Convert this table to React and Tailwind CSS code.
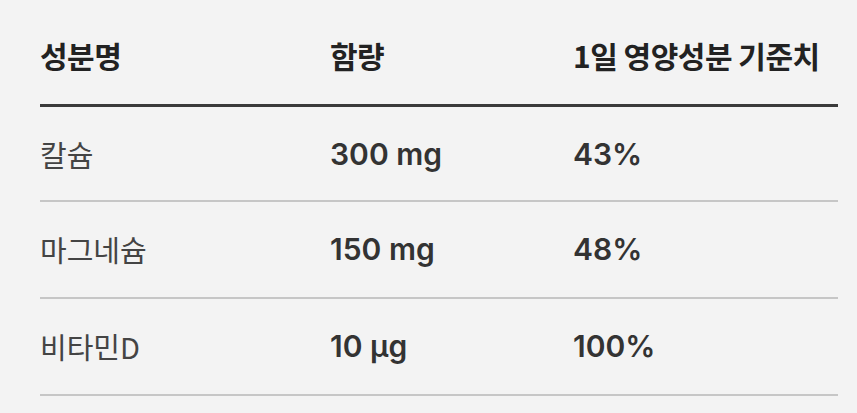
const rows = [
  { name: "칼슘", amount: "300 mg", daily: "43%" },
  { name: "마그네슘", amount: "150 mg", daily: "48%" },
  { name: "비타민D", amount: "10 µg", daily: "100%" },
];

export default function App() {
  return (
    <div
      className="min-h-screen w-full bg-[#f3f3f3] pl-[40px] pr-[19px]"
      style={{ fontFamily: '"Noto Sans CJK KR", "Noto Sans", sans-serif' }}
    >
      <div className="grid grid-cols-[290px_243px_1fr] items-center h-[107px] pt-[6px] border-b-[3px] border-[#3a3a3a] text-[30px] font-bold text-[#222] tracking-[-0.5px]">
        <div>성분명</div>
        <div>함량</div>
        <div>1일 영양성분 기준치</div>
      </div>
      {rows.map((r, i) => (
        <div
          key={r.name}
          className={
            "grid grid-cols-[290px_243px_1fr] items-center border-b-2 border-[#c6c6c6] " +
            (i === 0 ? "h-[95px] pt-[2px]" : "h-[97px]")
          }
        >
          <div className="text-[29px] text-[#444]">{r.name}</div>
          <div
            className="text-[30px] font-semibold text-[#333]"
            style={{ fontFamily: 'Inter, "Noto Sans CJK KR", sans-serif' }}
          >
            {r.amount}
          </div>
          <div
            className="text-[30px] font-semibold text-[#333]"
            style={{ fontFamily: 'Inter, "Noto Sans CJK KR", sans-serif' }}
          >
            {r.daily}
          </div>
        </div>
      ))}
    </div>
  );
}
